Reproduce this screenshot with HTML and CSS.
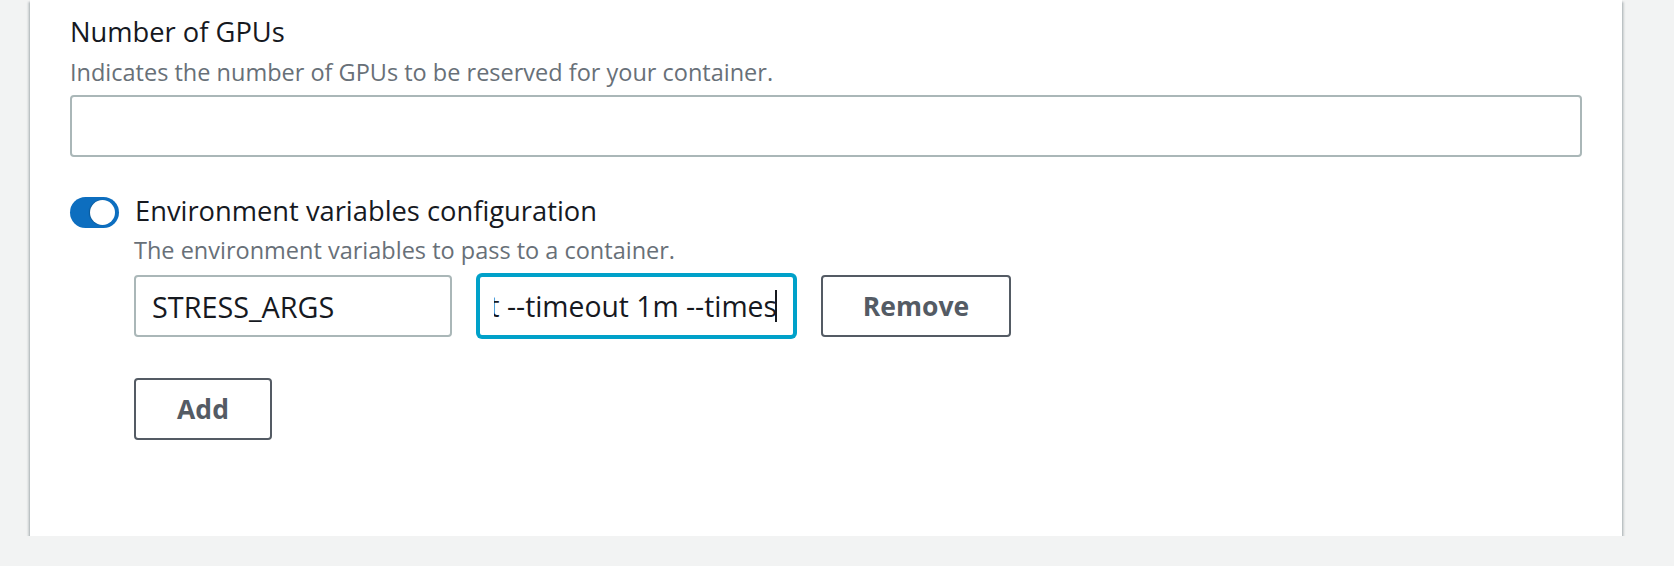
FILE: index.html
```html
<!DOCTYPE html>
<html lang="en">
<head>
<meta charset="utf-8">
<title>Container settings</title>
<link rel="stylesheet" href="styles.css">
</head>
<body>
<div class="page">
  <section class="card">
    <div class="field">
      <div class="label">Number of GPUs</div>
      <div class="desc">Indicates the number of GPUs to be reserved for your container.</div>
      <div class="input wide"></div>
    </div>

    <div class="toggle-row">
      <span class="toggle"><span class="knob"></span></span>
      <span class="label">Environment variables configuration</span>
    </div>
    <div class="sub">
      <div class="desc desc2">The environment variables to pass to a container.</div>
      <div class="env-row">
        <div class="input key"><span class="text">STRESS_ARGS</span></div>
        <div class="input value focused">
          <div class="scroll"><span class="text">t --timeout 1m --times</span><span class="caret"></span></div>
        </div>
        <button class="btn remove" type="button">Remove</button>
      </div>
      <button class="btn add" type="button">Add</button>
    </div>
  </section>
</div>
</body>
</html>
```

FILE: styles.css
```css
html, body {
  margin: 0;
  padding: 0;
  background: #f2f3f3;
  font-family: "Open Sans", "Noto Sans", sans-serif;
  color: #16191f;
}

.page {
  padding: 0 52px 0 30px;
}

.card {
  background: #ffffff;
  width: 1592px;
  box-sizing: border-box;
  padding: 14px 40px 96px 40px;
  box-shadow: 0 2px 2px 0 rgba(0, 28, 36, 0.3), 2px 2px 2px 0 rgba(0, 28, 36, 0.15), -2px 2px 2px 0 rgba(0, 28, 36, 0.15);
}

.label {
  font-size: 27.3px;
  line-height: 36px;
  color: #16191f;
}

.desc {
  font-size: 23.5px;
  line-height: 32px;
  color: #687078;
  margin-top: 6px;
}

.input {
  box-sizing: border-box;
  height: 62px;
  border: 2px solid #aab7b8;
  border-radius: 4px;
  background: #fff;
  padding: 0 16px;
  display: flex;
  align-items: center;
  font-size: 28.8px;
  color: #16191f;
}

.wide {
  margin-top: 7px;
  width: 100%;
}

.toggle-row {
  display: flex;
  align-items: flex-start;
  gap: 16px;
  margin-top: 36px;
}

.toggle {
  margin-top: 4px;
  width: 49px;
  height: 31px;
  border-radius: 16px;
  background: #0d6ebf;
  display: flex;
  align-items: center;
  justify-content: flex-end;
  padding: 0 4px;
  box-sizing: border-box;
  flex: none;
}

.knob {
  width: 25px;
  height: 25px;
  border-radius: 50%;
  background: #fff;
  box-shadow: -1px 0 1px rgba(0, 28, 36, 0.25);
}

.sub {
  padding-left: 64px;
}

.desc2 {
  margin-top: 5px;
}

.env-row {
  display: flex;
  gap: 26px;
  margin-top: 9px;
}

.key {
  width: 318px;
}

.value {
  width: 317px;
  padding-left: 13.5px;
  font-size: 28.3px;
}

.focused {
  border-color: #00a1c9;
  box-shadow: 0 0 0 2px #00a1c9;
}

.scroll {
  display: flex;
  justify-content: flex-end;
  align-items: center;
  overflow: hidden;
  white-space: nowrap;
  width: 100%;
}

.text {
  flex: none;
  white-space: nowrap;
}

.caret {
  flex: none;
  width: 2px;
  height: 32px;
  margin-left: -2px;
  background: #16191f;
}

.btn {
  box-sizing: border-box;
  height: 62px;
  border: 2px solid #545b64;
  border-radius: 4px;
  background: #fff;
  color: #545b64;
  font-family: "Open Sans", "Noto Sans", sans-serif;
  font-weight: 700;
  font-size: 26.5px;
  padding: 0;
  letter-spacing: 0;
  cursor: pointer;
}

.remove {
  width: 190px;
}

.add {
  margin-top: 41px;
  width: 138px;
}
```
